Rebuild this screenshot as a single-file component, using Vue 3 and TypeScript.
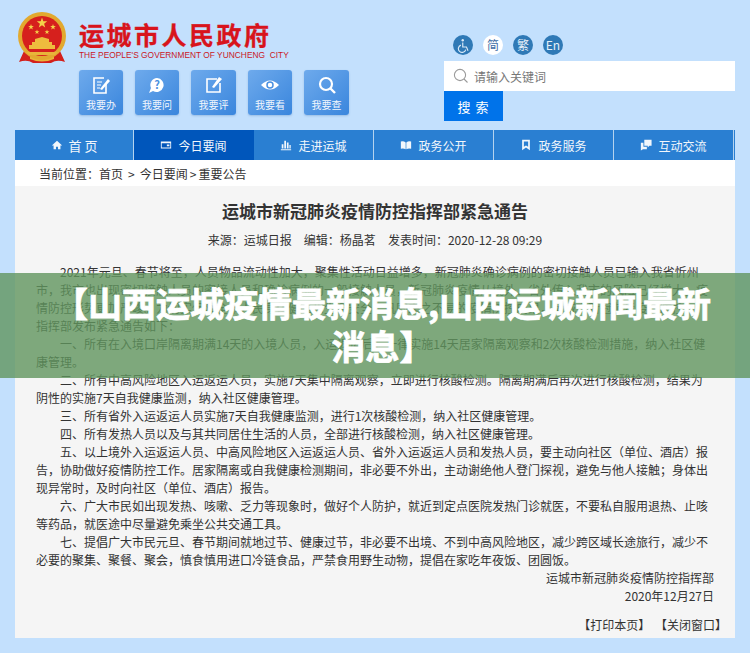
<template>
  <div class="page">
    <header class="header">
      <div class="brand">
        <div class="brand-top">
          <svg class="emblem" viewBox="0 0 50 52" width="50" height="52">
            <path d="M7 39 L2 50 Q10 47 16 51 L34 51 Q40 47 48 50 L43 39 Z" fill="#d3201c" />
            <path d="M13 47 Q25 52 37 47 L37 44 Q25 49 13 44 Z" fill="#e8b43a" />
            <circle cx="25" cy="24" r="24" fill="#e2a92f" />
            <circle cx="25" cy="24" r="20" fill="#d6201d" />
            <polygon v-for="s in stars" :key="s.x" :points="starPoints(s.x, s.y, s.r)" fill="#f4d24a" />
            <path d="M12 33 H38 V37 H12 Z M15 30 H35 V33 H15 Z M18 27 L25 25 L32 27 V30 H18 Z" fill="#eebc3e" />
            <path d="M9 40 H41 L38 43 H12 Z" fill="#e8b43a" />
          </svg>
          <div class="brand-text">
            <div class="brand-name">运城市人民政府</div>
            <div class="brand-en">THE PEOPLE'S GOVERNMENT OF YUNCHENG&nbsp; CITY</div>
          </div>
        </div>
        <div class="tiles">
          <a v-for="t in tiles" :key="t.label" class="tile">
            <svg viewBox="0 0 20 20" width="20" height="20" fill="none" stroke="#fff" stroke-width="1.6">
              <template v-if="t.icon === 'doc'">
                <path d="M15 8 V18 H3 V3 H13" />
                <path d="M6 7 H11 M6 10 H10 M6 13 H9" stroke-width="1.2" />
                <path d="M9 14 L17 4 L19 6 L11 15 Z" fill="#fff" stroke="none" />
              </template>
              <template v-else-if="t.icon === 'ask'">
                <path d="M10 3 A7 7 0 1 1 6 16 L2 18 L4 13 A7 7 0 0 1 10 3 Z" fill="#fff" stroke="none" />
                <text x="10" y="14" class="q">?</text>
              </template>
              <template v-else-if="t.icon === 'edit'">
                <path d="M13 4 H3 V17 H16 V8" />
                <path d="M8 12 L15 2 L18 4 L10 13 Z" fill="#fff" stroke="none" />
              </template>
              <template v-else-if="t.icon === 'eye'">
                <path d="M1 10 Q10 1 19 10 Q10 19 1 10 Z" fill="#fff" stroke="none" />
                <circle cx="10" cy="10" r="3" stroke="#4a90e0" stroke-width="1.5" />
              </template>
              <template v-else>
                <circle cx="9" cy="9" r="6" stroke-width="2.2" />
                <path d="M13.5 13.5 L18 18" stroke-width="2.4" />
              </template>
            </svg>
            <span>{{ t.label }}</span>
          </a>
        </div>
      </div>
      <div class="tools">
        <div class="langs">
          <span class="lang">
            <svg viewBox="0 0 20 20" width="15" height="15" fill="none" stroke="#dcebf8" stroke-width="1.5">
              <circle cx="9" cy="3" r="1.6" fill="#dcebf8" stroke="none" />
              <path d="M9 6 V12 H14 L16 17" />
              <path d="M6.5 9.5 A5 5 0 1 0 13 15.5" />
            </svg>
          </span>
          <span class="lang lang-on">简</span>
          <span class="lang">繁</span>
          <span class="lang">En</span>
        </div>
        <div class="search">
          <svg viewBox="0 0 16 16" width="16" height="16" fill="none" stroke="#9a9a9a" stroke-width="1.1">
            <circle cx="7" cy="7" r="5.6" />
            <path d="M11 11 L14.5 14.5" />
          </svg>
          <span>请输入关键词</span>
        </div>
        <button class="search-btn">搜 索</button>
      </div>
    </header>

    <main class="wrap">
      <nav class="nav">
        <a v-for="n in navItems" :key="n.label" class="nav-item" :class="{ active: n.active }">
          <svg viewBox="0 0 14 14" width="12" height="12" fill="#f2f7fc">
            <path v-if="n.icon === 'home'" d="M7 2 L13 7.5 H11 V12 H8.2 V9 H5.8 V12 H3 V7.5 H1 Z" />
            <path v-else-if="n.icon === 'card'" fill-rule="evenodd" d="M1 3 H13 V11 H1 Z M2 5 V10 H12 V5 Z M8 6.5 H11 V8.5 H8 Z" />
            <path v-else-if="n.icon === 'city'" d="M1 12 H13 V13 H1 Z M2 6 H4 V11 H2 Z M5 2 H7 V11 H5 Z M8 4 H10 V11 H8 Z M11 7 H12.5 V11 H11 Z" />
            <path v-else-if="n.icon === 'book'" d="M1 3 Q4 2 6.6 4 V12 Q4 10.5 1 11.5 Z M13 3 Q10 2 7.4 4 V12 Q10 10.5 13 11.5 Z" />
            <path v-else-if="n.icon === 'mark'" fill-rule="evenodd" d="M2.5 1 H11.5 V13 L7 10 L2.5 13 Z M4.5 3 V9 L7 7.5 L9.5 9 V3 Z" />
            <path v-else d="M5 1 H13.5 V8 H11 L9 10 V8 H5 Z M1 4.5 H4 V9 H8 V12 H3.5 L1 13.5 Z" />
          </svg>
          <span :class="{ spaced: n.icon === 'home' }">{{ n.label }}</span>
        </a>
      </nav>
      <div class="crumb">当前位置：首页<span class="sep">&gt;</span>今日要闻<span class="sep sep-tight">&gt;</span>重要公告</div>

      <article class="article">
        <h1 class="title">运城市新冠肺炎疫情防控指挥部紧急通告</h1>
        <div class="meta">
          <span>来源：运城日报</span>
          <span>编辑：杨晶茗</span>
          <span>发表时间：2020-12-28 09:29</span>
        </div>
        <div class="body">
          <p v-for="(p, i) in paragraphs" :key="i" :class="{ flush: i === 1 }">{{ p }}</p>
          <p class="sign">运城市新冠肺炎疫情防控指挥部</p>
          <p class="sign">2020年12月27日</p>
        </div>
        <div class="actions">【打印本页】 【关闭窗口】</div>
      </article>
    </main>

    <div class="banner">【山西运城疫情最新消息,山西运城新闻最新消息】</div>
  </div>
</template>

<script setup lang="ts">
interface Tile {
  label: string
  icon: string
}

interface NavItem {
  label: string
  icon: string
  active?: boolean
}

const stars = [
  { x: 25, y: 11, r: 5.5 },
  { x: 14, y: 15, r: 3 },
  { x: 36, y: 15, r: 3 },
  { x: 20, y: 20, r: 2.6 },
  { x: 30, y: 20, r: 2.6 },
]

const starPoints = (cx: number, cy: number, r: number): string => {
  const pts: string[] = []
  for (let i = 0; i < 10; i++) {
    const rad = i % 2 === 0 ? r : r * 0.4
    const a = -Math.PI / 2 + (i * Math.PI) / 5
    pts.push(`${(cx + rad * Math.cos(a)).toFixed(2)},${(cy + rad * Math.sin(a)).toFixed(2)}`)
  }
  return pts.join(' ')
}

const tiles: Tile[] = [
  { label: '我要办', icon: 'doc' },
  { label: '我要问', icon: 'ask' },
  { label: '我要评', icon: 'edit' },
  { label: '我要看', icon: 'eye' },
  { label: '我要查', icon: 'find' },
]

const navItems: NavItem[] = [
  { label: '首 页', icon: 'home' },
  { label: '今日要闻', icon: 'card', active: true },
  { label: '走进运城', icon: 'city' },
  { label: '政务公开', icon: 'book' },
  { label: '政务服务', icon: 'mark' },
  { label: '互动交流', icon: 'chat' },
]

const paragraphs: string[] = [
  '2021年元旦、春节将至，人员物品流动性加大，聚集性活动日益增多，新冠肺炎确诊病例的密切接触人员已输入我省忻州市，我市也出现密切接触人员的密接人员和确诊病例的一般接触人员，新冠肺炎疫情从境外、省外传入我市的风险已经增大，疫情防控形势更加严峻。为切实保障全市人民身体健康和生命安全，巩固来之不易的疫情防控成果，运城市新冠肺炎疫情防控',
  '指挥部发布紧急通告如下：',
  '一、所有在入境口岸隔离期满14天的入境人员，入运返运后，一律实施14天居家隔离观察和2次核酸检测措施，纳入社区健康管理。',
  '二、所有中高风险地区入运返运人员，实施7天集中隔离观察，立即进行核酸检测。隔离期满后再次进行核酸检测，结果为阴性的实施7天自我健康监测，纳入社区健康管理。',
  '三、所有省外入运返运人员实施7天自我健康监测，进行1次核酸检测，纳入社区健康管理。',
  '四、所有发热人员以及与其共同居住生活的人员，全部进行核酸检测，纳入社区健康管理。',
  '五、以上境外入运返运人员、中高风险地区入运返运人员、省外入运返运人员和发热人员，要主动向社区（单位、酒店）报告，协助做好疫情防控工作。居家隔离或自我健康检测期间，非必要不外出，主动谢绝他人登门探视，避免与他人接触；身体出现异常时，及时向社区（单位、酒店）报告。',
  '六、广大市民如出现发热、咳嗽、乏力等现象时，做好个人防护，就近到定点医院发热门诊就医，不要私自服用退热、止咳等药品，就医途中尽量避免乘坐公共交通工具。',
  '七、提倡广大市民元旦、春节期间就地过节、健康过节，非必要不出境、不到中高风险地区，减少跨区域长途旅行，减少不必要的聚集、聚餐、聚会，慎食慎用进口冷链食品，严禁食用野生动物，提倡在家吃年夜饭、团圆饭。',
]
</script>

<style>
html,
body {
  margin: 0;
  background: #c3e0fd;
}
</style>

<style scoped>
.page {
  position: relative;
  width: 750px;
  height: 653px;
  overflow: hidden;
  background: #c3e0fd;
  color: #333;
  font-family: "Noto Sans CJK SC", "Liberation Sans", sans-serif;
  font-size: 12px;
  text-spacing-trim: space-all;
}

.header {
  display: flex;
  justify-content: space-between;
  height: 130px;
  padding: 12px 15px 0 17px;
  box-sizing: border-box;
}

.brand-top {
  display: flex;
  gap: 12px;
  height: 58px;
}

.emblem {
  flex: none;
}

.brand-text {
  padding-top: 7px;
}

.brand-name {
  color: #d8141c;
  font-size: 25px;
  font-weight: 700;
  line-height: 30px;
  letter-spacing: 2.5px;
  white-space: nowrap;
  -webkit-text-stroke: 0.3px #d8141c;
}

.brand-en {
  color: #c9181f;
  font-family: "Liberation Sans", sans-serif;
  font-size: 8.4px;
  line-height: 12px;
  white-space: nowrap;
}

.tiles {
  display: flex;
  gap: 12px;
  margin-left: 62px;
}

.tile {
  display: flex;
  flex-direction: column;
  align-items: center;
  justify-content: center;
  gap: 4px;
  width: 44px;
  height: 45px;
  border-radius: 3px;
  background: linear-gradient(135deg, #6eaaec, #3a86dd);
  box-shadow: 0 1px 2px rgba(60, 110, 170, 0.3);
  color: #f2f7fd;
  font-size: 10px;
  line-height: 12px;
}

.tile:nth-child(3),
.tile:nth-child(5) {
  width: 45px;
}

.q {
  fill: #4a90e0;
  stroke: none;
  font-size: 11px;
  font-weight: 700;
  text-anchor: middle;
}

.tools {
  display: flex;
  flex-direction: column;
  width: 291px;
  padding-top: 23px;
}

.langs {
  display: flex;
  gap: 10px;
  height: 26px;
  margin-left: 9px;
}

.lang {
  display: flex;
  align-items: center;
  justify-content: center;
  width: 20px;
  height: 20px;
  border-radius: 50%;
  background: #2f79b6;
  color: #e6f0f9;
  font-size: 12px;
  line-height: 20px;
}

.lang-on {
  background: #fff;
  color: #3f6ea5;
}

.search {
  display: flex;
  align-items: center;
  gap: 5px;
  height: 30px;
  padding-left: 9px;
  background: #fff;
  color: #777;
}

.search-btn {
  width: 59px;
  height: 30px;
  padding: 0;
  border: none;
  background: #0073ea;
  color: #fff;
  font-family: inherit;
  font-size: 13px;
  letter-spacing: 1px;
}

.wrap {
  width: 720px;
  margin-left: 15px;
}

.nav {
  display: flex;
  height: 30px;
  background: #2a7fd2;
}

.nav-item {
  display: flex;
  align-items: center;
  justify-content: center;
  gap: 6px;
  width: 120px;
  box-sizing: border-box;
  border-right: 1px solid #b5d3ef;
  color: #f2f7fc;
  font-size: 12px;
}

.nav-item:first-child {
  width: 119px;
}

.nav-item.active {
  border-right-color: #0056bb;
  background: #0056bb;
}

.spaced {
  font-size: 13px;
}

.crumb {
  height: 26px;
  padding-left: 24px;
  background: #fff;
  line-height: 28px;
}

.sep {
  margin: 0 5px;
}

.sep-tight {
  margin: 0 2px;
}

.article {
  height: 452px;
  padding-top: 10px;
  box-sizing: border-box;
  background: #f5f5f5;
}

.title {
  margin: 0;
  color: #333;
  font-size: 17px;
  font-weight: 700;
  line-height: 30px;
  text-align: center;
}

.meta {
  display: flex;
  justify-content: center;
  gap: 12px;
  margin-top: 5px;
  line-height: 18px;
}

.body {
  width: 678px;
  margin: 14px 0 0 21px;
  line-height: 18px;
}

.body p {
  margin: 0;
  text-indent: 2em;
}

.body p.flush {
  text-indent: 0;
}

.body p.sign {
  text-align: right;
}

.actions {
  margin: 11px 8px 0 0;
  line-height: 18px;
  text-align: right;
  word-spacing: 2px;
}

.banner {
  position: absolute;
  top: 273px;
  left: 0;
  right: 0;
  display: flex;
  align-items: center;
  justify-content: center;
  height: 105px;
  padding: 0 32px 4px 47px;
  box-sizing: border-box;
  background: rgba(96, 149, 94, 0.8);
  color: #fff;
  font-size: 34px;
  font-weight: 700;
  line-height: 43px;
  text-align: center;
  -webkit-text-stroke: 0.8px #fff;
}
</style>
